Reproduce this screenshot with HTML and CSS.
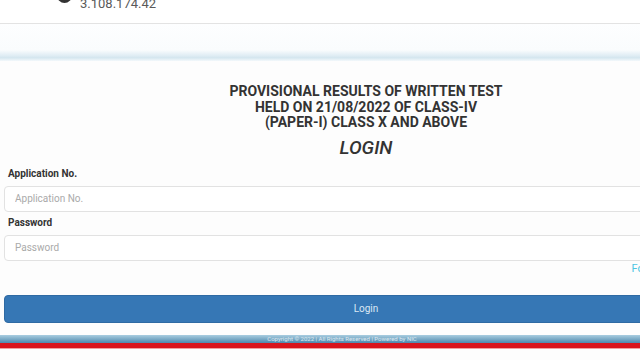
FILE: index.html
```html
<!DOCTYPE html>
<html>
<head>
    <title>Login</title>
    <link rel="stylesheet" href="styles.css">
</head>
<body>
    <div class="addr-bar">
        <span class="dot"></span>
        <span class="addr">3.108.174.42</span>
    </div>

    <div class="nav-strip"></div>

    <div class="container">
        <h3 class="notice">PROVISIONAL RESULTS OF WRITTEN TEST<br>HELD ON 21/08/2022 OF CLASS-IV<br>(PAPER-I) CLASS X AND ABOVE</h3>
        <h2 class="title">LOGIN</h2>
        <form id="login-form">
            <div class="input-group">
                <label for="appno">Application No.</label>
                <input type="text" id="appno" placeholder="Application No.">
            </div>
            <div class="input-group">
                <label for="pwd">Password</label>
                <input type="password" id="pwd" placeholder="Password">
            </div>
            <div class="forgot"><a href="#">Forgot Password?</a></div>
            <button type="submit" class="login-btn">Login</button>
        </form>
    </div>

    <div class="footer">
        <div class="footer-text">Copyright &copy; 2022 | All Rights Reserved | Powered by NIC</div>
    </div>
    <div class="footer-bottom"></div>
</body>
</html>
```

FILE: styles.css
```css
body {
    margin: 0;
    background-color: #fdfdfd;
    font-family: Roboto, "Liberation Sans", sans-serif;
    color: #333;
    overflow: hidden;
    width: 640px;
    height: 360px;
}

.addr-bar {
    height: 23px;
    background-color: #fff;
    border-bottom: 1px solid #e3e3e3;
    display: flex;
    align-items: flex-start;
    position: relative;
}

.dot {
    position: absolute;
    left: 57px;
    top: -12px;
    width: 15px;
    height: 15px;
    border-radius: 50%;
    background-color: #333;
}

.addr {
    margin-left: 80px;
    margin-top: -4px;
    font-size: 13px;
    color: #5a5a5a;
    line-height: 16px;
}

.nav-strip {
    height: 37px;
    background: linear-gradient(to bottom, #fdfeff 0%, #fafcfd 70%, #e2eef5 84%, #d4e6ef 91%, #f3f8fb 100%);
}

.container {
    width: 724px;
    margin-left: 4px;
    padding-top: 23px;
}

.notice {
    text-align: center;
    font-size: 14px;
    font-weight: bold;
    line-height: 15.5px;
    margin: 0;
    color: #333;
}

.title {
    text-align: center;
    font-size: 19px;
    font-style: italic;
    font-weight: 500;
    margin: 6px 0 9px 0;
    color: #333;
    line-height: 22px;
}

.input-group {
    display: flex;
    flex-direction: column;
}

label {
    font-size: 10px;
    font-weight: bold;
    color: #333;
    margin-left: 4px;
    margin-bottom: 6px;
    line-height: 12px;
}

input {
    height: 26px;
    box-sizing: border-box;
    border: 1px solid #e2e2e2;
    border-radius: 4px;
    padding: 0 10px;
    font-size: 10px;
    font-family: Roboto, "Liberation Sans", sans-serif;
    background-color: #fff;
    margin-bottom: 5px;
}

input::placeholder {
    color: #aaa;
}

.forgot {
    text-align: right;
    margin-right: 8px;
    margin-top: -5px;
    height: 34px;
    font-size: 11px;
    line-height: 16px;
}

.forgot a {
    color: #4cc6e2;
    text-decoration: none;
}

.login-btn {
    width: 100%;
    height: 28px;
    background-color: #3677b5;
    border: 1px solid #2f6aa3;
    border-radius: 4px;
    color: #dce8f4;
    font-size: 10px;
    font-family: Roboto, "Liberation Sans", sans-serif;
    cursor: pointer;
}

.footer {
    margin-top: 12px;
    height: 8px;
    background: linear-gradient(to bottom, #a9cde0, #4d88ad);
    text-align: center;
    overflow: hidden;
}

.footer-text {
    font-size: 6px;
    line-height: 8px;
    color: #dfe9f0;
    width: 724px;
    margin-left: -20px;
}

.footer-bottom {
    height: 5px;
    background-color: #d9141c;
    border-bottom: 1px solid #f0a0a0;
}
```
